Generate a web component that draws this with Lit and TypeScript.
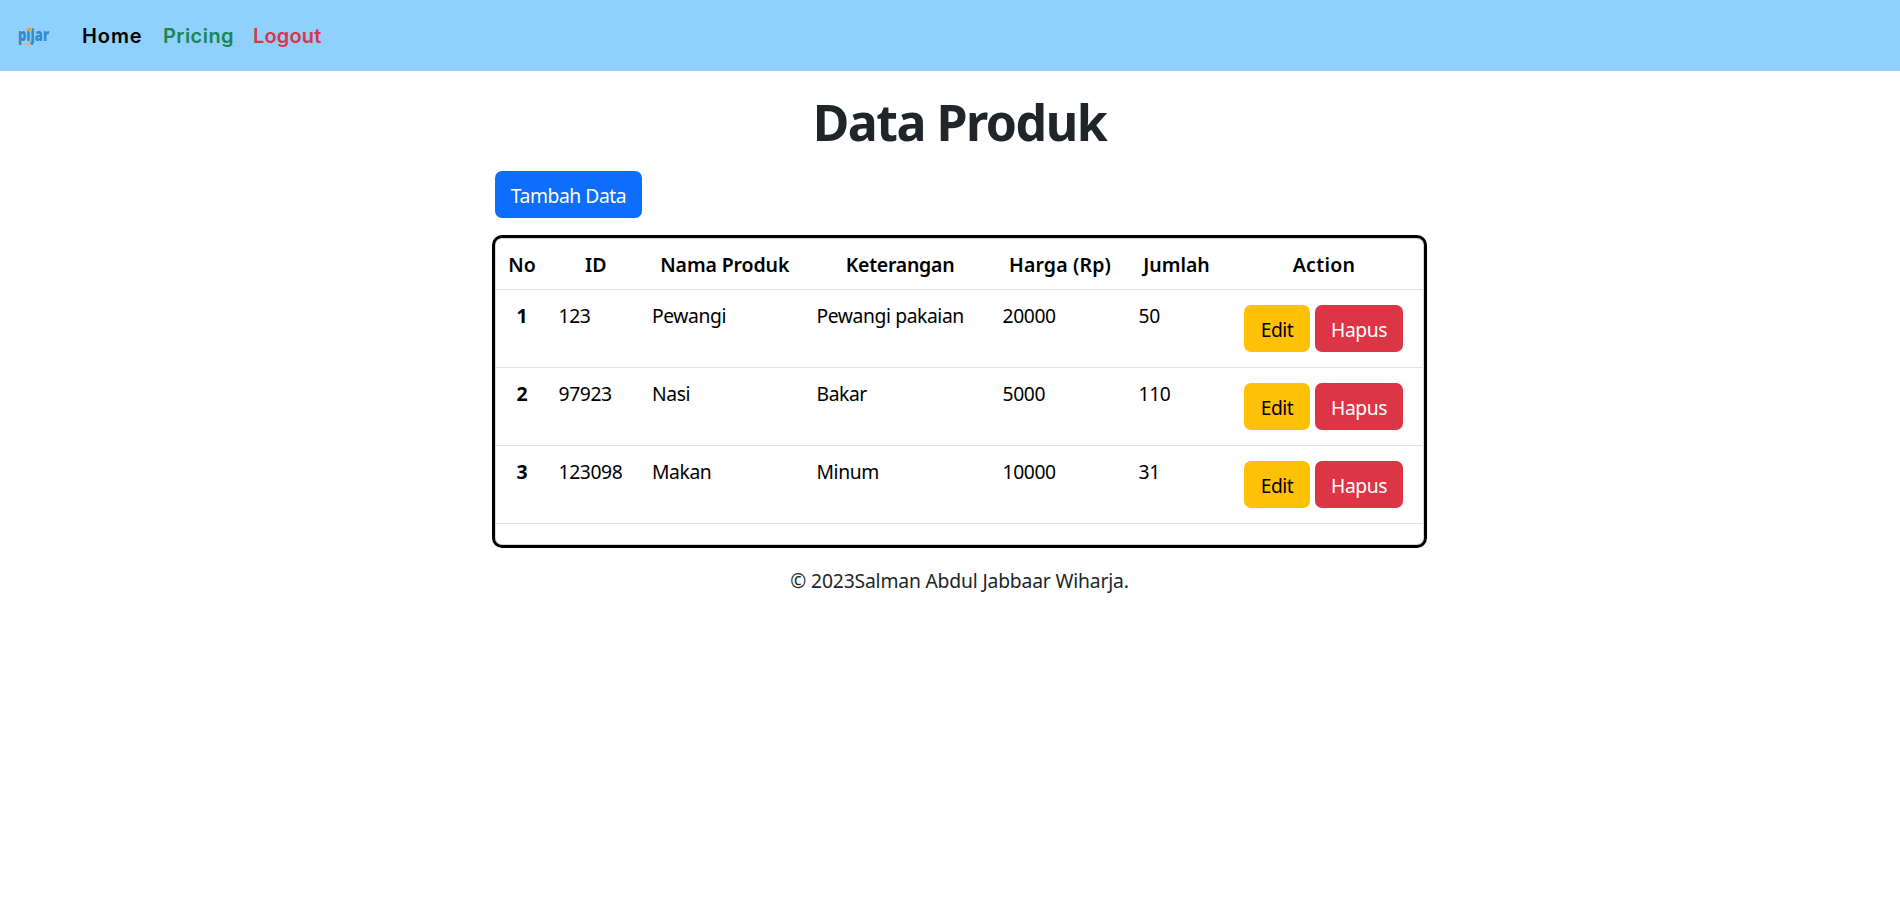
import { LitElement, html, css } from "lit";
import { customElement, state } from "lit/decorators.js";

interface Product {
  id: string;
  name: string;
  note: string;
  price: number;
  stock: number;
}

const logo = html`
  <svg class="logo" viewBox="0 0 36 24" role="img" aria-label="pijar">
    <text class="word" x="0" y="17.4" textLength="31" lengthAdjust="spacingAndGlyphs">pijar</text>
    <path d="M8.6 2.8 L11.6 4.2 L14.8 2.8 L13.9 6 L11.7 8.2 L9.6 6 Z" fill="#f5b04e" />
    <path d="M10.4 4.8 h2.6 l-1.3 2.6 Z" fill="#f08024" />
    <path d="M5.6 20.3 h7.6" stroke="#dfb080" stroke-width="2" stroke-dasharray="1.7 .4" />
  </svg>`;

@customElement("nav-bar")
class NavBar extends LitElement {
  static styles = css`
    :host { display: block; }
    nav {
      display: flex; align-items: center; height: 71px; box-sizing: border-box;
      padding-left: 18px; background: #90d0ff;
      font: 600 20px/30px Inter, "Open Sans", sans-serif;
    }
    .logo { width: 36px; height: 24px; margin-right: 28px; overflow: visible; flex: none; }
    .word { font: 800 17px "Open Sans", sans-serif; fill: #3389cb; }
    a { text-decoration: none; white-space: nowrap; }
    .home { width: 81px; color: #000; letter-spacing: .9px; }
    .pricing { width: 90px; color: #198754; letter-spacing: .45px; }
    .logout { color: #dc3545; letter-spacing: .15px; }
  `;
  render() {
    return html`<nav>${logo}<a class="home">Home</a><a class="pricing">Pricing</a><a class="logout">Logout</a></nav>`;
  }
}

@customElement("app-root")
class AppRoot extends LitElement {
  static styles = css`
    :host {
      display: block; min-height: 100vh; background: #fff; color: #212529;
      font: 400 19.3px/29px "Noto Sans", "Open Sans", sans-serif;
    }
    main { width: 935px; margin-left: 492px; }
    h1 {
      margin: 0; padding-top: 19px; height: 81px; line-height: 64px; text-align: center;
      font-size: 50px; font-weight: 700; letter-spacing: -1.5px;
    }
    .btn {
      box-sizing: border-box; height: 47px; border: 0; border-radius: 7px; padding: 1px 0 0;
      font: inherit; letter-spacing: -.45px; color: #fff; text-align: center;
    }
    .add { display: block; width: 147px; margin: 0 0 17px 3px; background: #0d6efd; }
    .edit { width: 66px; background: #ffc107; color: #000; }
    .delete { width: 88px; background: #dc3545; }
    .card {
      box-sizing: border-box; height: 313px; border: 3px solid #000; border-radius: 10px;
      box-shadow: inset 0 0 0 1px #d4d6d8; color: #000;
    }
    table { width: 929px; table-layout: fixed; border-collapse: separate; border-spacing: 0; }
    .c-no { width: 54px; } .c-id { width: 93.5px; } .c-name { width: 164.5px; } .c-note { width: 186px; }
    .c-price { width: 136px; } .c-stock { width: 95px; } .c-act { width: 200px; }
    th, td {
      box-sizing: border-box; padding: 11px 9px 0 9.5px; border-bottom: 1px solid #dee2e6;
      vertical-align: top; text-align: left; letter-spacing: -.4px; white-space: nowrap;
    }
    th { padding: 11px 9px 0; text-align: center; font-weight: 600; font-size: 19.5px; letter-spacing: 0; }
    thead th { height: 52px; padding-top: 12px; }
    thead th:nth-child(3) { letter-spacing: -.12px; }
    thead th:nth-child(4) { letter-spacing: -.27px; }
    thead th:nth-child(5) { letter-spacing: .15px; padding-right: 11px; }
    thead th:nth-child(7) { letter-spacing: .3px; }
    tbody th { font-weight: 700; }
    tbody th, tbody td { height: 78px; }
    td.cell { padding: 0; }
    .actions { display: flex; gap: 5px; padding: 15px 0 0 20px; }
    footer { margin-top: 18px; text-align: center; letter-spacing: -.17px; }
  `;

  @state() private products: Product[] = [
    { id: "123", name: "Pewangi", note: "Pewangi pakaian", price: 20000, stock: 50 },
    { id: "97923", name: "Nasi", note: "Bakar", price: 5000, stock: 110 },
    { id: "123098", name: "Makan", note: "Minum", price: 10000, stock: 31 },
  ];

  render() {
    return html`
      <nav-bar></nav-bar>
      <main>
        <h1>Data Produk</h1>
        <button class="btn add">Tambah Data</button>
        <div class="card">
          <table>
            <colgroup>
              <col class="c-no"><col class="c-id"><col class="c-name"><col class="c-note"><col class="c-price"><col class="c-stock"><col class="c-act">
            </colgroup>
            <thead>
              <tr>${["No", "ID", "Nama Produk", "Keterangan", "Harga (Rp)", "Jumlah", "Action"].map((h) => html`<th>${h}</th>`)}</tr>
            </thead>
            <tbody>
              ${this.products.map((p, i) => html`<tr>
                <th>${i + 1}</th><td>${p.id}</td><td>${p.name}</td><td>${p.note}</td><td>${p.price}</td><td>${p.stock}</td>
                <td class="cell"><div class="actions"><button class="btn edit">Edit</button><button class="btn delete">Hapus</button></div></td>
              </tr>`)}
            </tbody>
          </table>
        </div>
        <footer>© 2023Salman Abdul Jabbaar Wiharja.</footer>
      </main>`;
  }
}
